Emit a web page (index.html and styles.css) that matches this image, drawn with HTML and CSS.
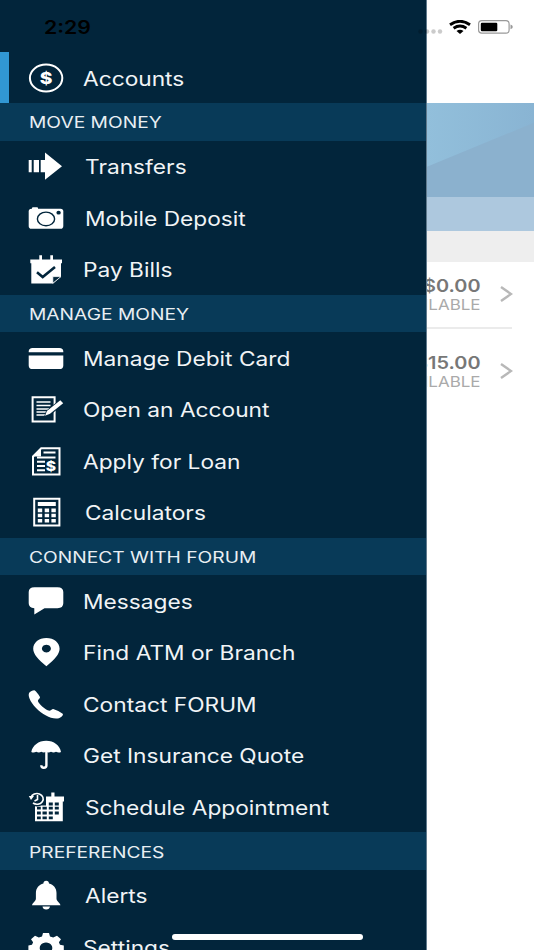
FILE: index.html
```html
<!DOCTYPE html>
<html lang="en">

<head>
    <meta charset="UTF-8">
    <meta name="viewport" content="width=device-width, initial-scale=1.0">
    <title>Accounts</title>
    <link rel="stylesheet" href="styles.css">
</head>

<body>
    <!-- Account page, visible to the right of the drawer -->
    <main class="page">
        <div class="page-header"></div>
        <div class="hero">
            <svg viewBox="0 0 534 93" preserveAspectRatio="none">
                <defs>
                    <linearGradient id="sky" x1="0.8" x2="1">
                        <stop offset="0" stop-color="#92bfdb" />
                        <stop offset="1" stop-color="#89b4d3" />
                    </linearGradient>
                </defs>
                <rect width="534" height="93" fill="url(#sky)" />
                <path d="M427 63L534 19.500V93H427Z" fill="#8bb1ce" />
            </svg>
        </div>
        <div class="hero-strip"></div>
        <div class="spacer"></div>
        <div class="account">
            <div class="balance">
                <span class="amount">$0.00</span>
                <span class="caption">AVAILABLE</span>
            </div>
            <svg class="chevron" width="14" height="18" viewBox="0 0 14 18"><path d="M2 2L12 9L2 16" /></svg>
        </div>
        <div class="account last">
            <div class="balance">
                <span class="amount">$15.00</span>
                <span class="caption">AVAILABLE</span>
            </div>
            <svg class="chevron" width="14" height="18" viewBox="0 0 14 18"><path d="M2 2L12 9L2 16" /></svg>
        </div>
    </main>

    <!-- Slide-out menu -->
    <nav class="drawer">
        <a class="item active">
            <svg class="icon" viewBox="0 0 36 32">
                <ellipse class="line" cx="18.100" cy="16" rx="16.200" ry="13.500" />
                <text class="dollar" transform="translate(18.100 21.500) scale(1.200 1)">$</text>
            </svg>
            <span class="label">Accounts</span>
        </a>

        <h2 class="section"><span>MOVE MONEY</span></h2>
        <a class="item">
            <svg class="icon" viewBox="0 0 36 32">
                <path d="M.7 10h3v12.300h-3zM5.700 10H11v12.300H5.700zM12.700 10H17V2.500L34 16.200 17 29.700V22.300h-4.300z" />
            </svg>
            <span class="label shift">Transfers</span>
        </a>
        <a class="item">
            <svg class="icon" viewBox="0 0 36 32">
                <path d="M4 7.500V6q0-.8 1-.8h4q1 0 1 .8v1.500z" />
                <rect x=".7" y="6.700" width="34.600" height="20" rx="2.800" />
                <ellipse class="cut-line" cx="18" cy="16.900" rx="8.600" ry="6.800" />
                <ellipse class="cut" cx="30.600" cy="10.700" rx="2.200" ry="1.900" />
            </svg>
            <span class="label shift">Mobile Deposit</span>
        </a>
        <a class="item">
            <svg class="icon" viewBox="0 0 36 32">
                <path d="M2.300 6.600h9V2.200H14v4.400h8.300V2.200H25v4.400h9v3.600h-1v13L25 30.400H3.300V10.200h-1z" />
                <path d="M24.800 23.600H33L24.800 30.300z" class="fold" />
                <path class="tick" d="M9 19.300L14.700 24 27 14" />
            </svg>
            <span class="label">Pay Bills</span>
        </a>

        <h2 class="section"><span>MANAGE MONEY</span></h2>
        <a class="item">
            <svg class="icon" viewBox="0 0 36 32">
                <path d="M.7 10.200V9.500Q.7 5.900 4.700 5.900H31.300Q35.300 5.900 35.300 9.500v.7zM.7 13.600H35.300V23.400Q35.300 27 31.300 27H4.700Q.7 27 .7 23.400z" />
            </svg>
            <span class="label">Manage Debit Card</span>
        </a>
        <a class="item">
            <svg class="icon" viewBox="0 0 36 32">
                <path class="line" d="M4.600 4.200H26.600V28.600H4.600z" />
                <path class="line thin" d="M8.500 9H22.500M8.500 12.500H22.500M8.500 16H21M8.500 19H18.500M8.500 22H17" />
                <path class="cut" d="M32.500 6L36 10.500 22 22.500 16 24 18 18z" />
                <path d="M32.300 7.200L35.200 10.200 22 20.700 17 22.800 18.900 18z" />
            </svg>
            <span class="label">Open an Account</span>
        </a>
        <a class="item">
            <svg class="icon" viewBox="0 0 36 32">
                <path class="line" d="M5 11.500L13.200 3.300H31.500V29.600H5z" />
                <path d="M4.500 11.500L13 3v8.500z" />
                <path class="line" d="M15.500 7.600H27.500M9 12.500H27.500M9 16.800H17M9 21H17M9 25.200H17" />
                <text class="dollar small" transform="translate(23 25.600) scale(1.200 1)">$</text>
            </svg>
            <span class="label">Apply for Loan</span>
        </a>
        <a class="item">
            <svg class="icon" viewBox="0 0 36 32">
                <path class="line" d="M6.200 2.700H31.400V29.600H6.200z" />
                <path d="M9.800 6H27.800v4H9.800zM9.800 12.600h4.400v3.600H9.800zM16.700 12.600h4.400v3.600h-4.400zM23.400 12.600h4.400v3.600h-4.400zM9.800 17.700h4.400v3.600H9.800zM16.700 17.700h4.400v3.600h-4.400zM23.400 17.700h4.400v3.600h-4.400zM9.800 22.900h4.400v3.600H9.800zM16.700 22.900h4.400v3.600h-4.400zM23.400 22.900h4.400v3.600h-4.400z" />
            </svg>
            <span class="label shift">Calculators</span>
        </a>

        <h2 class="section wide"><span>CONNECT WITH FORUM</span></h2>
        <a class="item">
            <svg class="icon" viewBox="0 0 36 32">
                <path d="M6.500 2.200H29.500Q35.300 2.200 35.300 7V18.300Q35.300 23.200 29.500 23.200H16.500L6.300 29.500V23.200Q.7 23 .7 18.300V7Q.7 2.200 6.500 2.200z" />
            </svg>
            <span class="label">Messages</span>
        </a>
        <a class="item">
            <svg class="icon" viewBox="0 0 36 32">
                <path fill-rule="evenodd" d="M18.400 2C26 2 31.600 6.600 31.600 12.800 31.600 18 26.500 24 18.400 30.200 10.300 24 5.200 18 5.200 12.800 5.200 6.600 10.800 2 18.400 2zM18.400 8.800a4.500 3.800 0 1 0 .01 0z" />
            </svg>
            <span class="label">Find ATM or Branch</span>
        </a>
        <a class="item">
            <svg class="icon" viewBox="0 0 36 32">
                <path d="M1.200 4.800C2.500 3.300 4.500 2.200 6.300 2.200 7.500 2.300 10.500 6.300 12 9 12.500 10.300 9.600 11.600 9.900 12.900 10.700 15.700 17 21.200 20.500 22.600 22.600 23.300 23.500 20.800 25.300 20.900 28.300 21.900 32.500 23.800 34.700 25.800 35.700 27 33.500 29.200 31 30.200 27 31.300 22 29.800 18 27.500 11 23.800 4 16.800 1.500 10.500.6 8.200.4 6.200 1.200 4.800z" />
            </svg>
            <span class="label">Contact FORUM</span>
        </a>
        <a class="item">
            <svg class="icon" viewBox="0 0 36 32">
                <path d="M3.300 13C4.500 6.500 10.500 1.800 18.200 1.800S31.900 6.500 33 13Q30.500 14.200 28 12.700 25.500 14.300 23 12.700 20.500 14.300 18.200 12.700 15.800 14.300 13.300 12.700 10.800 14.300 8.300 12.700 5.800 14.200 3.300 13z" />
                <path class="line handle" d="M18.400 12V26.500Q18.400 28.700 15.800 28.700 13.300 28.700 13.300 26.200" />
            </svg>
            <span class="label">Get Insurance Quote</span>
        </a>
        <a class="item">
            <svg class="icon" viewBox="0 0 36 32">
                <path d="M7 14.500H18V5.600h5.300V1.500h3.200v4.100H36v4.800h-1.200V30.200H7z" />
                <circle class="cut" cx="8.800" cy="7.600" r="8" />
                <path class="gaps" d="M9 17.200h3.800M14.500 17.200h4.300M20.800 13h4M26.800 13h4M20.800 17.200h4M26.800 17.200h4M9 22h3.800M14.500 22h4.300M20.800 22h4M26.800 22h4M9 26.800h3.800M14.500 26.800h4.300M20.800 26.800h4" />
                <path class="line thin" d="M3 6.500A6.200 5.400 0 1 1 5 12M9.500 4V8.500L6.500 10" />
                <path d="M.8 5H6L3 9z" />
            </svg>
            <span class="label shift">Schedule Appointment</span>
        </a>

        <h2 class="section"><span>PREFERENCES</span></h2>
        <a class="item">
            <svg class="icon" viewBox="0 0 36 32">
                <path d="M18.200 1.800C20 1.800 21 3 21 4.600 25.500 5.800 28.500 9.200 28.500 14V19.500C28.500 22.300 31.500 23 32.500 26.200H4C5 23 7.900 22.300 7.900 19.500V14C7.900 9.200 11 5.800 15.400 4.600 15.400 3 16.400 1.800 18.200 1.800zM14.500 27.600H22Q21.500 30.500 18.200 30.500T14.500 27.600z" />
            </svg>
            <span class="label shift">Alerts</span>
        </a>
        <a class="item">
            <svg class="icon" viewBox="0 0 36 32">
                <path fill-rule="evenodd" d="M15 2H21L22 5.500 25.200 6.600 29 4.800 33 8.200 30.900 11.300 32 13.700 35.800 14.400V19.500L32 20.300 30.900 23 33 26 29 29.200 25.200 27.500 22 28.800 21 32H15L14 28.800 10.800 27.500 7 29.200 3 26 5.100 23 4 20.300.4 19.500V14.400L4 13.700 5.100 11.300 3 8.200 7 4.800 10.800 6.600 14 5.500zM18 11.500a6.300 5.500 0 1 0 .01 0z" />
            </svg>
            <span class="label">Settings</span>
        </a>
    </nav>

    <!-- Phone status bar and home indicator -->
    <div class="status">
        <span class="time">2:29</span>
        <div class="status-icons">
            <svg class="dots" width="25" height="5" viewBox="0 0 25 5">
                <circle cx="2.500" cy="2.500" r="2.200" />
                <circle cx="9" cy="2.500" r="2.200" />
                <circle cx="15.500" cy="2.500" r="2.200" />
                <circle cx="22" cy="2.500" r="2.200" />
            </svg>
            <svg width="22" height="14" viewBox="0 0 22 14">
                <path class="wave" d="M1 4.800Q11-2.200 21 4.800M4.600 8.300Q11 3.900 17.400 8.300" />
                <path d="M7.500 11Q11 8.600 14.500 11L11 13.900z" />
            </svg>
            <svg width="36" height="14" viewBox="0 0 36 14">
                <rect class="shell" x=".6" y=".6" width="30.500" height="12.600" rx="3.200" />
                <rect x="2.800" y="2.700" width="16.500" height="8.500" rx="1.200" />
                <path class="cap" d="M32.500 4.600Q34.800 5.400 34.800 7T32.500 9.200z" />
            </svg>
        </div>
    </div>
    <div class="home-bar"></div>
</body>

</html>
```
FILE: styles.css
```css
* {
    box-sizing: border-box;
}

body {
    margin: 0;
    position: relative;
    width: 534px;
    height: 950px;
    overflow: hidden;
    background: #fff;
    font-family: Inter, "Liberation Sans", sans-serif;
}

svg {
    display: block;
}

/* Account page */
.page {
    width: 100%;
    height: 100%;
}

.page-header {
    height: 103px;
}

.hero {
    height: 94px;
}

.hero svg {
    width: 100%;
    height: 100%;
}

.hero-strip {
    height: 34px;
    background: #adc8de;
}

.spacer {
    height: 30.500px;
    background: #eee;
}

.account {
    display: flex;
    justify-content: flex-end;
    align-items: center;
    gap: 18px;
    height: 67px;
    margin-right: 22px;
    border-bottom: 2px solid #ebebeb;
}

.account.last {
    height: 85px;
    border-bottom: 0;
}

.account .chevron {
    margin-right: -1px;
}

.balance {
    display: flex;
    flex-direction: column;
    align-items: flex-end;
    transform: scaleX(1.170);
    transform-origin: right;
    padding-top: 2px;
}

.amount {
    font-size: 17px;
    font-weight: 600;
    line-height: 20px;
    color: #777;
}

.caption {
    font-size: 14.500px;
    line-height: 18px;
    color: #aaa;
}

.chevron {
    fill: none;
    stroke: #b8b8b8;
    stroke-width: 2.400;
}

/* Drawer */
.drawer {
    position: absolute;
    top: 0;
    left: 0;
    width: 427px;
    height: 950px;
    padding-top: 51.800px;
    overflow: hidden;
    background: #02253b;
    border-right: 1px solid #607a8d;
}

.item {
    display: flex;
    align-items: center;
    height: 51.440px;
    padding-left: 28px;
    color: #f1f4f6;
}

.item.active {
    padding-left: 19px;
    border-left: 9px solid #3197d3;
}

.label {
    margin-left: 19px;
    padding-top: 2px;
    font-size: 19.500px;
    line-height: 24px;
    white-space: nowrap;
    transform: scaleX(1.165);
    transform-origin: left;
}

.label.shift {
    margin-left: 20.500px;
}

.section {
    display: flex;
    align-items: center;
    height: 37.300px;
    margin: 0;
    padding-top: 2px;
    padding-left: 29px;
    background: #083a58;
    color: #e9eff3;
    font-size: 15.700px;
    font-weight: 400;
}

.section span {
    white-space: nowrap;
    transform: scaleX(1.225);
    transform-origin: left;
}

/* Icons */
.icon {
    flex: none;
    width: 36px;
    height: 32px;
    fill: #fff;
}

.icon .line {
    fill: none;
    stroke: #fff;
    stroke-width: 2;
}

.icon .thin {
    stroke-width: 1.600;
}

.icon .handle {
    stroke-width: 2.400;
}

.icon .cut {
    fill: #02253b;
}

.icon .cut-line {
    fill: none;
    stroke: #02253b;
    stroke-width: 1.400;
}

.icon .tick {
    fill: none;
    stroke: #02253b;
    stroke-width: 2.600;
}

.icon .fold {
    fill: #02253b;
    stroke: #fff;
    stroke-width: .8;
}

.icon .gaps {
    fill: none;
    stroke: #02253b;
    stroke-width: 2.800;
}

.dollar {
    font-size: 16px;
    font-weight: 800;
    text-anchor: middle;
}

.dollar.small {
    font-size: 13px;
}

/* Status bar */
.status {
    position: absolute;
    top: 0;
    left: 0;
    display: flex;
    justify-content: space-between;
    align-items: center;
    width: 100%;
    height: 54px;
    padding: 0 20px 0 44px;
}

.time {
    padding-top: 1px;
    font-size: 18px;
    font-weight: 600;
    transform: scaleX(1.180);
    transform-origin: left;
}

.status-icons {
    display: flex;
    align-items: center;
    gap: 7px;
}

.dots {
    margin-top: 9px;
    margin-right: -1px;
    fill: #000;
    opacity: .2;
}

.wave {
    fill: none;
    stroke: #000;
    stroke-width: 2.900;
}

.shell {
    fill: none;
    stroke: #999;
    stroke-width: 1.200;
}

.cap {
    fill: #999;
}

.home-bar {
    position: absolute;
    left: 172px;
    bottom: 10px;
    width: 191px;
    height: 6px;
    border-radius: 3px;
    background: #fff;
}
```
